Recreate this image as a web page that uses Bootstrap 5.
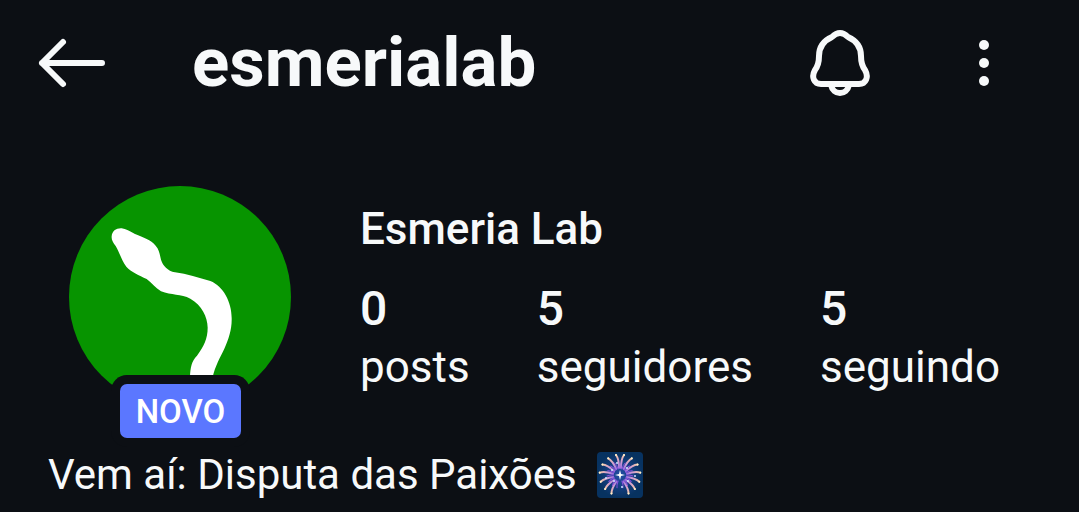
<!DOCTYPE html>
<html lang="pt-BR">
<head>
<meta charset="utf-8">
<meta name="viewport" content="width=device-width, initial-scale=1">
<title>esmerialab</title>
<link href="https://cdn.jsdelivr.net/npm/bootstrap@5.3.0/dist/css/bootstrap.min.css" rel="stylesheet">
<style>
  body { background: #0c0f14; color: #f7f9fa; font-family: Roboto, "Liberation Sans", sans-serif; font-size: 42px; line-height: 56px; }
  .topbar { height: 126px; padding: 0 71px 0 36px; }
  .icon-btn { background: none; border: 0; padding: 0; color: inherit; line-height: 0; }
  .handle { font-size: 69px; line-height: 80px; font-weight: 700; margin: 0 0 0 84px; }
  .menu-btn { margin-left: 90px; }
  .profile { padding: 60px 79px 0 69px; }
  .avatar { width: 222px; height: 252px; margin-right: 69px; }
  .tag-new { left: 51px; bottom: 0; width: 121px; height: 54px; line-height: 56px; font-size: 33px; font-weight: 500; background: #5b77ff; border-radius: 7px; box-shadow: 0 0 0 9px #0c0f14; color: #fff; }
  .full-name { font-size: 44px; line-height: 56px; font-weight: 500; margin: 15px 0 22px; }
  .count { font-size: 48px; line-height: 60px; font-weight: 500; }
  .count-label { font-size: 44px; }
  .bio { padding: 9px 48px 0; }
  .bio svg { margin-left: 20px; }
</style>
</head>
<body>
<header class="topbar d-flex align-items-center">
  <button class="icon-btn" type="button" aria-label="Voltar">
    <svg width="72" height="60" viewBox="0 0 72 60" fill="none" stroke="currentColor" stroke-width="6" stroke-linecap="round" stroke-linejoin="round"><path d="M66 30H6M27 9 6 30l21 21"/></svg>
  </button>
  <h1 class="handle">esmerialab</h1>
  <button class="icon-btn ms-auto" type="button" aria-label="Notificações">
    <svg width="60" height="68" viewBox="0 0 60 68" fill="none" stroke="currentColor" stroke-width="6" stroke-linejoin="round"><path d="M30 4c-4 0-6 2-8 4C13 12 9 19 9 27c0 7-1 10-4 14-4 7-1 14 6 14h38c7 0 10-7 6-14-3-4-4-7-4-14 0-8-4-15-13-19-2-2-4-4-8-4Z"/><path d="M21 56c1 5 5 8 9 8s8-3 9-8"/></svg>
  </button>
  <button class="icon-btn menu-btn" type="button" aria-label="Mais opções">
    <svg width="48" height="60" viewBox="0 0 48 60" fill="currentColor"><circle cx="24" cy="12" r="5"/><circle cx="24" cy="30" r="5"/><circle cx="24" cy="48" r="5"/></svg>
  </button>
</header>
<main>
  <section class="profile d-flex">
    <div class="avatar position-relative flex-shrink-0">
      <svg class="d-block" width="222" height="222" viewBox="42 33 666 666" role="img" aria-label="Foto do perfil">
        <circle cx="375" cy="366" r="333" fill="#079400"/>
        <path fill="#fff" d="M170 184C171 168 184 159 200 160C212 161 225 170 240 177C266 188 287 194 302 212C314 226 314 239 318 254C324 273 338 287 360 292C396 297 431 308 466 318C505 334 530 381 530 429C531 463 521 492 508 521C496 546 480 574 473 606H405C406 577 410 558 426 542C446 513 458 492 458 458C457 425 441 391 406 371C378 357 349 361 318 349C301 339 292 325 275 312C252 300 229 292 214 275C198 253 194 233 182 213C174 202 169 194 170 184Z"/>
      </svg>
      <span class="tag-new position-absolute text-center">NOVO</span>
    </div>
    <div class="flex-grow-1">
      <h2 class="full-name">Esmeria Lab</h2>
      <div class="d-flex justify-content-between">
        <a class="text-reset text-decoration-none" href="#posts"><span class="count d-block">0</span><span class="count-label d-block">posts</span></a>
        <a class="text-reset text-decoration-none" href="#seguidores"><span class="count d-block">5</span><span class="count-label d-block">seguidores</span></a>
        <a class="text-reset text-decoration-none" href="#seguindo"><span class="count d-block">5</span><span class="count-label d-block">seguindo</span></a>
      </div>
    </div>
  </section>
  <div class="bio d-flex align-items-center">
    <p class="m-0">Vem aí: Disputa das Paixões</p>
    <svg width="46" height="46" viewBox="0 0 46 46" role="img" aria-label="Fogos de artifício">
      <defs>
        <radialGradient id="night"><stop stop-color="#244da5"/><stop offset="1" stop-color="#073260"/></radialGradient>
        <linearGradient id="spark" gradientUnits="userSpaceOnUse" x1="23" y1="20" x2="23" y2="1"><stop stop-color="#7b50e5"/><stop offset=".5" stop-color="#d09ad4"/><stop offset="1" stop-color="#f8cf9b"/></linearGradient>
        <g id="ray" fill="none" stroke="url(#spark)" stroke-width="2" stroke-linecap="round"><path d="M24 16Q24 7 27 3"/><path d="M25 17Q26 13 28 11" stroke="#8c50e0" stroke-width="1"/><circle cx="27" cy="3" r="1" fill="#fff1ca" stroke="none"/></g>
        <g id="fan"><use href="#ray"/><use href="#ray" transform="rotate(24 23 23)"/><use href="#ray" transform="rotate(48 23 23)"/><use href="#ray" transform="rotate(72 23 23)"/><use href="#ray" transform="rotate(98 23 23)"/><use href="#ray" transform="rotate(122 23 23)"/><use href="#ray" transform="rotate(144 23 23)"/></g>
      </defs>
      <rect width="46" height="46" rx="4" fill="url(#night)"/>
      <use href="#fan"/>
      <use href="#fan" transform="translate(46 0) scale(-1 1)"/>
      <path d="m23 18 1 4 4 1-4 1-1 4-1-4-4-1 4-1Z" fill="#fff"/>
      <g fill="#cfe4ff"><circle cx="15" cy="18" r="1"/><circle cx="30" cy="16" r="1"/><circle cx="17" cy="29" r="1"/><circle cx="31" cy="29" r="1"/><circle cx="38" cy="24" r="1"/><circle cx="9" cy="26" r="1"/><circle cx="20" cy="11" r="1"/><circle cx="25" cy="35" r="1"/></g>
    </svg>
  </div>
</main>
<script src="https://cdn.jsdelivr.net/npm/bootstrap@5.3.0/dist/js/bootstrap.bundle.min.js"></script>
</body>
</html>
